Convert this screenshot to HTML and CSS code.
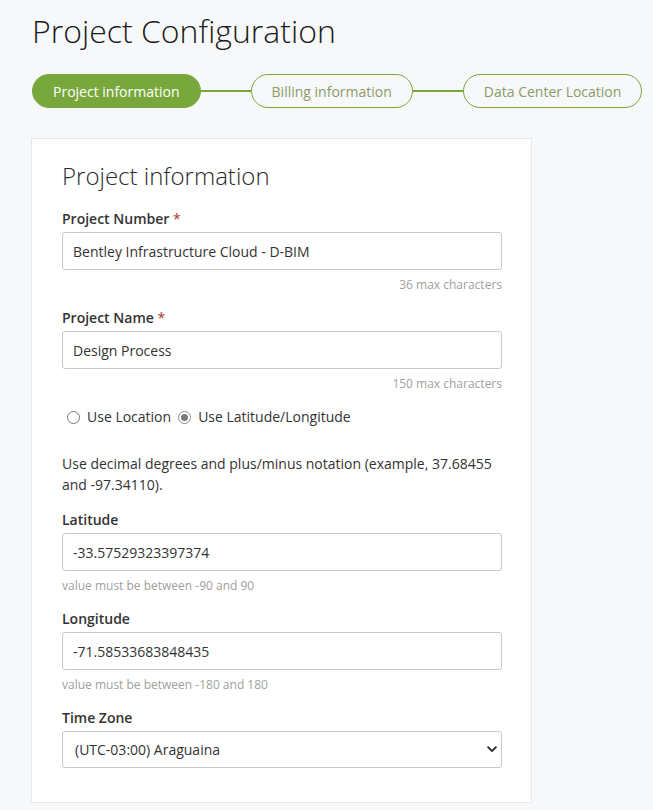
FILE: index.html
```html
<!DOCTYPE html>
<html lang="en">
<head>
<meta charset="utf-8">
<title>Project Configuration</title>
<link rel="stylesheet" href="styles.css">
</head>
<body>
<div class="page">
  <h1 class="title">Project Configuration</h1>
  <div class="stepper">
    <div class="step active">Project information</div>
    <div class="connector"></div>
    <div class="step">Billing information</div>
    <div class="connector"></div>
    <div class="step">Data Center Location</div>
  </div>
  <div class="card">
    <h2 class="card-title">Project information</h2>

    <div class="field">
      <label class="label">Project Number <span class="req">*</span></label>
      <input class="input" type="text" value="Bentley Infrastructure Cloud - D-BIM">
      <div class="hint right">36 max characters</div>
    </div>

    <div class="field">
      <label class="label">Project Name <span class="req">*</span></label>
      <input class="input" type="text" value="Design Process">
      <div class="hint right">150 max characters</div>
    </div>

    <div class="radios">
      <label class="radio"><input type="radio" name="loc"> Use Location</label>
      <label class="radio"><input type="radio" name="loc" checked> Use Latitude/Longitude</label>
    </div>

    <p class="desc">Use decimal degrees and plus/minus notation (example, 37.68455 and -97.34110).</p>

    <div class="field">
      <label class="label">Latitude</label>
      <input class="input" type="text" value="-33.57529323397374">
      <div class="hint">value must be between -90 and 90</div>
    </div>

    <div class="field">
      <label class="label">Longitude</label>
      <input class="input" type="text" value="-71.58533683848435">
      <div class="hint">value must be between -180 and 180</div>
    </div>

    <div class="field last">
      <label class="label">Time Zone</label>
      <div class="select-wrap">
        <select class="select">
          <option>(UTC-03:00) Araguaina</option>
        </select>
        <svg class="chev" width="10" height="7" viewBox="0 0 10 7"><path d="M1.2 1.3 L5 5.1 L8.8 1.3" fill="none" stroke="#333" stroke-width="2" stroke-linecap="round" stroke-linejoin="round"/></svg>
      </div>
    </div>
  </div>
</div>
</body>
</html>
```

FILE: styles.css
```css
* { box-sizing: border-box; }
html, body { margin: 0; padding: 0; }
body {
  background: #f7f8fa;
  font-family: "Open Sans", "Noto Sans", sans-serif;
  color: #333;
}
.page {
  padding: 9px 0 0 32px;
}
.title {
  margin: 0;
  font-size: 32px;
  font-weight: 300;
  line-height: 44px;
  color: #1b1b1b;
}
.stepper {
  display: flex;
  align-items: center;
  margin-top: 21px;
}
.step {
  height: 34px;
  border: 1.5px solid #78a83c;
  border-radius: 17px;
  padding: 0 20px;
  display: flex;
  align-items: center;
  font-size: 14px;
  color: #8a9c66;
  background: transparent;
  white-space: nowrap;
}
.step.active {
  background: #78a83c;
  color: #fff;
}
.connector {
  width: 50px;
  height: 2px;
  background: #78a83c;
}
.card {
  margin-top: 30px;
  width: 501px;
  margin-left: -1px;
  background: #fff;
  border: 1px solid #e6e8eb;
  padding: 20px 30px 34px 30px;
}
.card-title {
  margin: 0 0 16px 0;
  font-size: 24px;
  font-weight: 300;
  line-height: 34px;
  color: #2a2a2a;
}
.field {
  display: flex;
  flex-direction: column;
  margin-bottom: 15px;
}
.field.last { margin-bottom: 0; }
.label {
  font-size: 14px;
  font-weight: 600;
  line-height: 20px;
  color: #333;
  margin-bottom: 3px;
}
.req { color: #a33a2a; font-weight: 400; }
.input, .select {
  width: 440px;
  height: 38px;
  border: 1px solid #c8c8c8;
  border-radius: 3px;
  padding: 0 10px;
  font-family: "Open Sans", "Noto Sans", sans-serif;
  font-size: 14px;
  color: #333;
  background: #fff;
  outline: none;
}
.hint {
  font-size: 12px;
  line-height: 16px;
  color: #a0a0a0;
  margin-top: 7px;
}
.hint.right { text-align: right; width: 440px; }
.radios {
  display: flex;
  gap: 6px;
  margin-top: 3px;
  margin-left: 4px;
}
.radio {
  display: flex;
  align-items: center;
  font-size: 14px;
  line-height: 20px;
  color: #333;
}
.radio input {
  -webkit-appearance: none;
  appearance: none;
  width: 13px;
  height: 13px;
  margin: 0 7px 0 1px;
  border: 1px solid #767676;
  border-radius: 50%;
  background: #fff;
  display: inline-grid;
  place-content: center;
}
.radio input:checked {
  border-color: #8a8a8a;
}
.radio input:checked::before {
  content: "";
  width: 7px;
  height: 7px;
  border-radius: 50%;
  background: #7a7a7a;
}
.desc {
  margin: 26px 0 15px 0;
  font-size: 14px;
  line-height: 21px;
  color: #333;
  width: 440px;
}
.select-wrap {
  position: relative;
  width: 440px;
}
.select {
  -webkit-appearance: none;
  appearance: none;
  height: 37px;
  padding-left: 12px;
}
.chev {
  position: absolute;
  right: 5px;
  top: 15px;
}
```
